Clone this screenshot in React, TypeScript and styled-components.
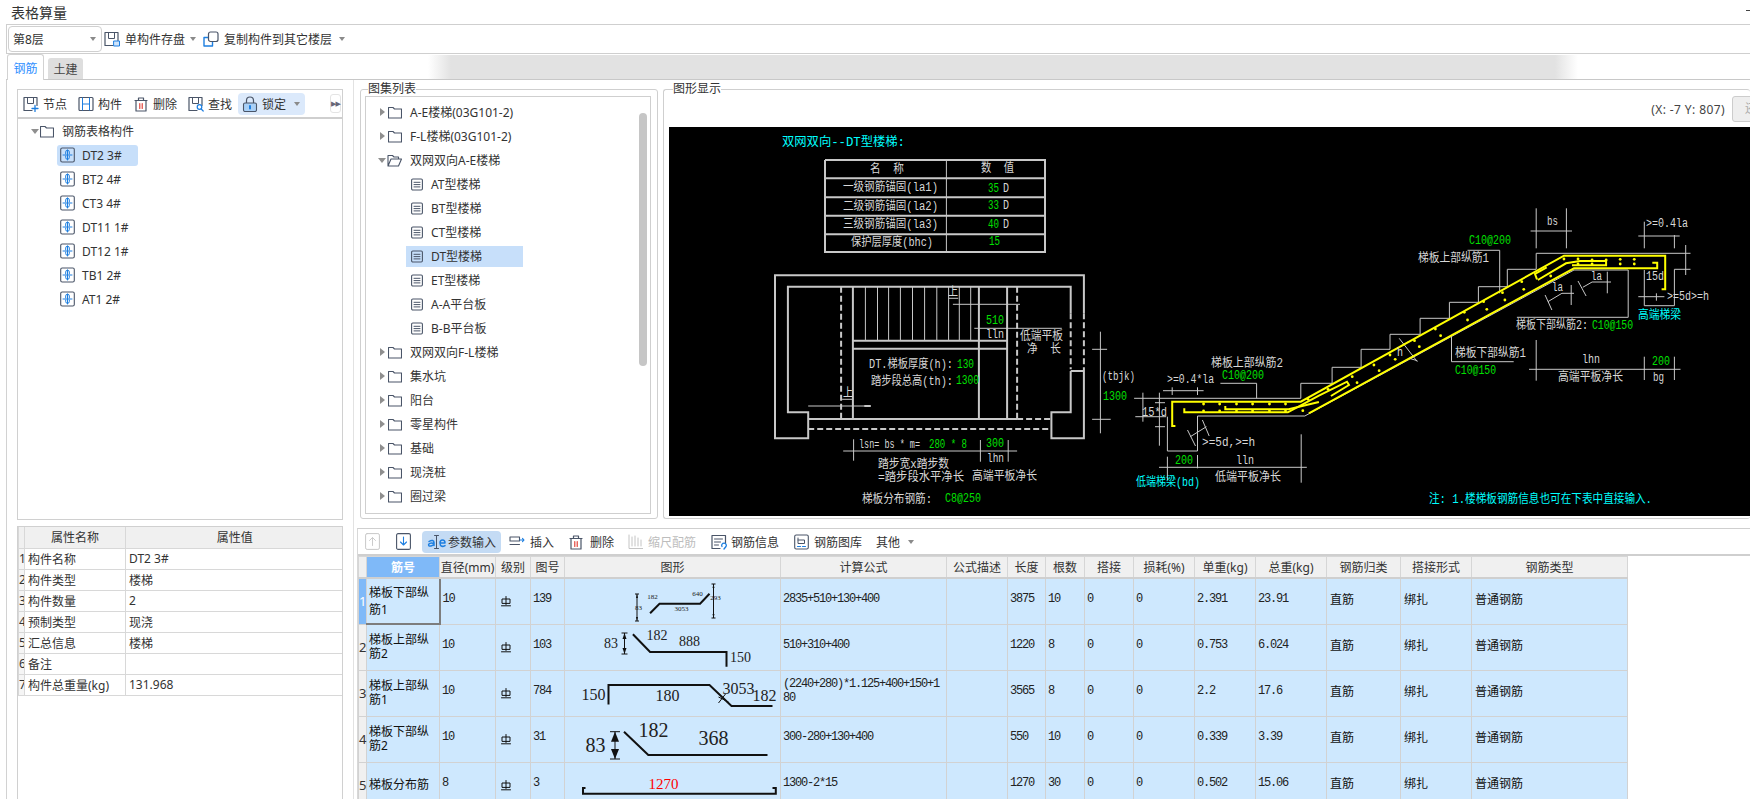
import React from 'react';
import styled, { createGlobalStyle } from 'styled-components';

const Global = createGlobalStyle`
  html, body { margin: 0; padding: 0; background: #fff; }
  body { font-family: "Noto Sans", "Noto Sans CJK SC", sans-serif; font-size: 12px; color: #333; }
  * { box-sizing: border-box; }
`;

const Page = styled.div`
  width: 1750px; height: 799px; overflow: hidden; display: flex; flex-direction: column; background: #fff;
`;
const TitleBar = styled.div`
  height: 24px; flex: none; display: flex; align-items: center; justify-content: space-between;
  padding-left: 11px; font-size: 14px; color: #333;
`;
const MinDash = styled.span`width: 4px; height: 1px; background: #444; margin-bottom: 3px;`;
const TopBar = styled.div`
  height: 30px; flex: none; margin-left: 6px; display: flex; align-items: center; padding-left: 1px;
  border: 1px solid #cfcfcf; border-right: 0;
`;
const Combo = styled.div`
  width: 94px; height: 26px; border: 1px solid #d0d0d0; border-radius: 4px; display: flex; align-items: center;
  justify-content: space-between; padding: 0 5px 0 4px; flex: none;
`;
const Caret = styled.i<{ $ml?: number }>`
  display: inline-block; width: 0; height: 0; flex: none; margin-left: ${p => p.$ml ?? 0}px;
  border-left: 3px solid transparent; border-right: 3px solid transparent; border-top: 4px solid #8a8a8a;
`;
const Tool = styled.div<{ $ml?: number; $on?: string; $off?: boolean; $gap?: number }>`
  display: inline-flex; align-items: center; flex: none; height: 22px; gap: ${p => p.$gap ?? 5}px;
  margin-left: ${p => p.$ml ?? 0}px; color: ${p => (p.$off ? '#bdbdbd' : '#333')};
  ${p => (p.$on ? `background:${p.$on}; border-radius:4px; padding:0 5px 0 4px;` : '')}
`;
const TabRow = styled.div`
  height: 26px; flex: none; margin-left: 6px; display: flex; align-items: flex-end; border-bottom: 1px solid #c8c8c8;
`;
const ActiveTab = styled.div`
  width: 37px; height: 26px; margin-bottom: -1px; margin-left: 1px; background: #fff; border: 1px solid #d2d2d2;
  border-bottom: 0; border-radius: 3px 3px 0 0; color: #2f8fff; display: flex; align-items: center; justify-content: center;
`;
const IdleTab = styled.div`
  width: 35px; height: 21px; margin-left: 4px; background: #dedede; border-radius: 3px 3px 0 0;
  color: #444; display: flex; align-items: center; justify-content: center;
`;
const TabFiller = styled.div`
  width: 1150px; height: 24px; margin-left: 345px;
  background: linear-gradient(to right, #fff, #e2e2e2 2%, #e2e2e2 98%, #fff);
`;
const Body = styled.div`flex: 1; min-height: 0; display: flex;`;
const LeftCol = styled.div`
  width: 348px; margin-left: 6px; flex: none; padding: 9px 10px 0 10px; display: flex; flex-direction: column; gap: 6px;
  border-left: 1px solid #d2d2d2; border-right: 1px solid #e2e2e2;
`;
const TreeBox = styled.div`height: 431px; flex: none; border: 1px solid #d0d0d0; overflow: hidden;`;
const LeftTools = styled.div`
  height: 29px; display: flex; align-items: center; padding: 0 1px 0 5px; border-bottom: 2px solid #cfcfcf;
`;
const Collapse = styled.div`
  margin-left: auto; width: 11px; height: 19px; border: 1px solid #e4e4e4; border-radius: 3px; color: #667;
  display: flex; align-items: center; justify-content: center; font-size: 7px; letter-spacing: -1px; font-family: "DejaVu Sans", sans-serif;
`;
const Row = styled.div<{ $pad: number }>`
  height: 24px; display: flex; align-items: center; padding-left: ${p => p.$pad}px; white-space: nowrap;
`;
const SelBox = styled.div<{ $w: number; $r?: number; $sel?: boolean; $inset?: number; $gap?: number }>`
  display: flex; align-items: center; height: 21px; width: ${p => p.$w}px; gap: ${p => p.$gap ?? 7}px; padding-left: ${p => p.$inset ?? 3}px;
  border-radius: ${p => p.$r ?? 0}px; background: ${p => (p.$sel ? '#c7dffa' : 'transparent')};
`;
const ArrowRight = styled.i`
  width: 0; height: 0; flex: none; border-top: 4px solid transparent; border-bottom: 4px solid transparent;
  border-left: 5px solid #8f8f8f; margin-left: 1px; margin-right: 3px;
`;
const ArrowDown = styled.i`
  width: 0; height: 0; flex: none; border-left: 4px solid transparent; border-right: 4px solid transparent;
  border-top: 5px solid #8f8f8f; margin-right: 1px;
`;
const FolderLabel = styled.span`margin-left: 8px;`;
const PropBox = styled.div`flex: 1; min-height: 0; border: 1px solid #d0d0d0; border-bottom: 0; overflow: hidden;`;
const PropTable = styled.table`
  border-collapse: collapse; table-layout: fixed; width: 325px; color: #333;
  th { height: 21px; background: #f0f0f0; font-weight: 400; border: 1px solid #d8d8d8; border-top: 0; padding: 0; }
  td { height: 21px; border: 1px solid #d8d8d8; padding: 0 0 0 3px; white-space: nowrap; overflow: hidden; }
  td:first-child { padding: 0; text-align: center; background: #f5f5f5; }
  td:last-child, th:last-child { border-right: 0; }
`;
const MainCol = styled.div`flex: 1; min-width: 0; display: flex; flex-direction: column; margin-left: 3px;`;
const UpperRow = styled.div`height: 439px; flex: none; display: flex; padding: 2px 0 0 3px; gap: 5px;`;
const Group = styled.fieldset<{ $w?: number }>`
  margin: 0; padding: 0 6px 4px 4px; min-width: 0; border: 1px solid #cfcfcf; border-radius: 3px; height: 437px;
  ${p => (p.$w ? `width:${p.$w}px; flex:none;` : 'flex:1; padding-right:0; border-right:0;')}
`;
const GroupTitle = styled.legend<{ $ml: number }>`
  margin-left: ${p => p.$ml}px; padding: 0; height: 14px; line-height: 14px; font-size: 12px; color: #333;
`;
const ListBox = styled.div`position: relative; height: 418px; border: 1px solid #cfcfcf; padding-top: 3px; overflow: hidden;`;
const ScrollThumb = styled.div`
  position: absolute; left: 273px; top: 16px; width: 8px; height: 253px; background: #c6c6c6; border-radius: 4px;
`;
const CoordRow = styled.div`
  height: 31px; display: flex; align-items: center; justify-content: flex-end; color: #444; margin-left: 1px;
  padding-bottom: 5px; letter-spacing: 0.4px;
`;
const GhostBtn = styled.div`
  flex: none; width: 40px; height: 26px; margin: 0 -22px 0 7px; background: #eee; border: 1px solid #ccc;
  border-radius: 3px; padding-left: 12px; line-height: 24px; color: #aaa; overflow: hidden; white-space: nowrap;
`;
const Canvas = styled.svg`display: block; width: 1081px; height: 389px; background: #000; margin-left: 1px;`;
const CadLine = styled.polyline<{ $k: string }>`
  fill: none;
  stroke: ${p => (p.$k === 'y' ? '#ffff00' : '#c8c8c8')};
  stroke-width: ${p => (p.$k === 'y' || p.$k === 't' || p.$k === 'd' ? 2 : 1)}px;
  stroke-dasharray: ${p => (p.$k === 'd' ? '6 3' : 'none')};
`;
const CadDot = styled.circle`fill: #ffff00;`;
const CadText = styled.text<{ $c: string }>`
  font-family: "Liberation Mono", "Noto Sans CJK SC", monospace; font-size: 12px;
  fill: ${p => (p.$c === 'g' ? '#00e000' : p.$c === 'c' ? '#00ffff' : '#d8d8d8')};
`;
const LowerPanel = styled.div`
  flex: 1; min-height: 0; margin-top: 9px; border-top: 1px solid #cfcfcf; border-left: 1px solid #d8d8d8; overflow: hidden;
`;
const LowerTools = styled.div`
  height: 27px; display: flex; align-items: center; padding-left: 7px; border-bottom: 2px solid #cfcfcf;
`;
const Grid = styled.table`
  border-collapse: collapse; table-layout: fixed; width: 1269px; color: #222;
  th { height: 21px; background: #f0f0f0; font-weight: 400; border: 1px solid #d6d6d6; border-bottom: 2px solid #cfcfcf; padding: 0; color: #333; white-space: nowrap; }
  td { height: 46px; background: #cee8fe; border: 1px solid #d2d2d2; padding: 0 0 4px 2px; vertical-align: middle; }
`;
const HeadActive = styled.th`&& { background: #7fb9f8; color: #fff; font-weight: 700; }`;
const NumCell = styled.td<{ $on?: boolean }>`
  && { padding: 0; text-align: center; background: ${p => (p.$on ? '#7fb9f8' : '#f0f0f0')}; color: ${p => (p.$on ? '#fff' : '#333')}; font-size: 13px; }
`;
const NameCell = styled.td<{ $on?: boolean }>`
  && {
    line-height: ${p => (p.$on ? 17 : 14.5)}px; padding: 0 0 0 2px; color: #111; word-break: break-all;
    ${p => (p.$on ? 'border: 2px solid #7d7d7d; border-top: 1px solid #7d7d7d; border-left: 1px solid #bbb;' : '')}
  }
`;
const Mono = styled.td`
  && { font-family: "Liberation Mono", "Noto Sans CJK SC", monospace; letter-spacing: -1.2px; word-break: break-all; line-break: anywhere; line-height: 14px; color: #222; padding-right: 3px; }
`;
const CjkCell = styled.td`&& { color: #111; padding-left: 3px; }`;
const GradeCell = styled.td`&& { padding: 0 0 0 5px; }`;
const ShapeCell = styled.td`&& { padding: 0; }`;
const Shape = styled.svg`display: block; width: 216px; height: 45px;`;
const ShapeLine = styled.polyline`fill: none; stroke: #111; stroke-width: 2px;`;
const ShapeThin = styled.polyline`fill: none; stroke: #111; stroke-width: 1px;`;
const ShapeHead = styled.polygon`fill: #111;`;
const ShapeText = styled.text<{ $s: number; $c?: string }>`
  font-family: "Liberation Serif", serif; font-size: ${p => p.$s}px; fill: ${p => p.$c ?? '#222'}; text-anchor: middle; dominant-baseline: central;
`;
const IconBox = styled.svg`display: block; flex: none; fill: none; stroke-linecap: round; stroke-linejoin: round;`;

const D = '#4a5568';
const B = '#1e7fe0';
const Ico = ({ w = 16, h = 16, children }: { w?: number; h?: number; children: React.ReactNode }) => (
  <IconBox width={w} height={h} viewBox={`0 0 ${w} ${h}`}>{children}</IconBox>
);
const SquareH = ({ bar = true }: { bar?: boolean }) => (
  <>
    <path d="M1 1.5h13v8M9 14.5H1v-13" stroke={D} strokeWidth="1.2" />
    {bar && <path d="M4.5 2v5.5h6V2" stroke={D} strokeWidth="1" />}
  </>
);
const SaveIcon = () => <Ico><SquareH /><rect x="10" y="10" width="5.5" height="5" fill="#cfe4fb" stroke={B} /></Ico>;
const CopyIcon = () => (
  <Ico>
    <path d="M1 6.5h4M1 6.5v8.5h8.5v-4" stroke={B} strokeWidth="1.4" />
    <rect x="5.5" y="1" width="9.5" height="9.5" rx="2" stroke={D} strokeWidth="1.2" />
  </Ico>
);
const NodeIcon = () => <Ico><SquareH /><path d="M12 9.5v6M9 12.5h6" stroke={B} strokeWidth="1.3" /></Ico>;
const PartIcon = () => (
  <Ico><rect x="1" y="1.5" width="14" height="13" rx="1" stroke={D} strokeWidth="1.2" /><path d="M4.5 2v12M11.5 2v12M4.5 8h7" stroke={B} strokeWidth="1" /></Ico>
);
const TrashIcon = () => (
  <Ico>
    <path d="M3 4.5v10.5h10V4.5zM2 4.5h12M5.5 4.5V2h5v2.5" stroke={D} strokeWidth="1.2" />
    <path d="M6.8 7.5v5M9.2 7.5v5" stroke="#e0352b" strokeWidth="1.1" />
  </Ico>
);
const FindIcon = () => (
  <Ico><SquareH /><circle cx="11.5" cy="11" r="2.3" stroke={B} strokeWidth="1.2" /><path d="M13.2 13l2 2" stroke={B} strokeWidth="1.2" /></Ico>
);
const LockIcon = () => (
  <Ico>
    <path d="M4.5 7V4.5a3.5 3.5 0 017 0V7" stroke={D} strokeWidth="1.2" />
    <rect x="1.5" y="7" width="13" height="8.5" rx="1.5" fill="#a9d0f7" stroke={D} strokeWidth="1.1" />
    <path d="M8 10v2.5" stroke={B} strokeWidth="2" />
  </Ico>
);
const Folder = () => <Ico w={14} h={13}><path d="M.5 3V1.5h4.5l1.5 1.5h7v9H.5z" stroke={D} strokeWidth="1.1" /></Ico>;
const FolderOpen = () => (
  <Ico w={15} h={13}><path d="M1 12V1.5h4.5L7 3h4.5v2M1 12l3-7h10.5l-3 7z" stroke={D} strokeWidth="1.1" /></Ico>
);
const DocIcon = () => (
  <Ico w={12} h={13}>
    <rect x=".6" y="1" width="10.8" height="11" rx="1.2" stroke={D} strokeWidth="1.1" />
    <path d="M3 4.3h6M3 6.6h6M3 8.9h6" stroke={D} strokeWidth="1" />
  </Ico>
);
const ItemIcon = () => (
  <Ico w={15} h={16}>
    <rect x=".7" y="1" width="13.6" height="14" rx="1.5" stroke={D} strokeWidth="1.1" />
    <path d="M7.5 3v10M3 8h9M5.7 7V5a1.8 1.8 0 013.6 0v2M5.7 9v1.5a1.8 1.8 0 003.6 0V9" stroke={B} strokeWidth="1" />
  </Ico>
);
const UpIcon = ({ off }: { off?: boolean }) => {
  const c = off ? '#c8c8c8' : D;
  return (
    <Ico w={15} h={17}>
      <rect x=".6" y=".6" width="13.8" height="15.8" rx="1.5" stroke={c} strokeWidth="1" />
      <path d="M7.5 12.5v-8M4.5 7.5l3-3 3 3" stroke={off ? '#ccc' : B} strokeWidth="1" />
    </Ico>
  );
};
const DownIcon = () => (
  <Ico w={15} h={17}>
    <rect x=".6" y=".6" width="13.8" height="15.8" rx="1.5" stroke={D} strokeWidth="1.1" />
    <path d="M7.5 4v8M4.5 9l3 3 3-3" stroke={B} strokeWidth="1.1" />
  </Ico>
);
const ParamIcon = () => (
  <Ico w={20} h={16}>
    <path d="M3 7.5c3-2 5-1 5 1v3M8 9.5c-3-1-6 0-5.3 1.8.7 1.4 3.6.7 5.3-1" stroke={B} strokeWidth="1.5" />
    <path d="M8.5 1.5h4M8.5 14.5h4M10.5 1.5v13" stroke={D} strokeWidth="1" />
    <path d="M14 9h5M19 9c0-4-5-4-5 0s3 3.8 5 2.6" stroke={B} strokeWidth="1.5" />
  </Ico>
);
const InsertIcon = () => (
  <Ico w={16} h={14}>
    <path d="M1 2h9.5v4M1 2v4h9.5M1 9.5h9.5" stroke={D} strokeWidth="1.1" />
    <path d="M11 5h4M13.5 3.3L15 5l-1.5 1.7" stroke={B} strokeWidth="1.1" />
  </Ico>
);
const ScaleIcon = () => (
  <Ico w={15} h={16}>
    <path d="M1 1v13.5h14M4 3v9M7 2v10M10 4v8M13 6v6" stroke="#c4c4c4" strokeWidth="1" />
  </Ico>
);
const InfoIcon = () => (
  <Ico>
    <path d="M9 14.5H1v-13h13.5v8" stroke={D} strokeWidth="1.2" />
    <path d="M3.5 5h8M3.5 8h6M3.5 11h4" stroke={D} strokeWidth="1" />
    <path d="M11 12.5a2.3 2.3 0 114 0l-2 2.5" stroke={B} strokeWidth="1.3" />
  </Ico>
);
const LibIcon = () => (
  <Ico w={15} h={16}>
    <rect x=".7" y="1" width="13.6" height="14" rx="1.5" stroke={D} strokeWidth="1.1" />
    <path d="M4 4v5.5h6.5V6H4" stroke={D} strokeWidth="1" />
    <path d="M3.5 12.5h3M8.5 12.5h3" stroke={B} strokeWidth="1.2" />
  </Ico>
);
const GradeMark = () => (
  <IconBox width="10" height="11" viewBox="0 0 10 11">
    <path d="M1 7V3h8v4zM5 .5V8.5M.5 9.8h9" stroke="#111" strokeWidth="1" />
  </IconBox>
);

type CadL = [string, number[]];
const mapL = (a: number[]) => a.map((v, i) => (i % 2 ? (80 + v / 3).toFixed(1) : (660 + v / 2.8).toFixed(1))).join(' ');
const mapR = (a: number[]) => a.map((v, i) => (i % 2 ? (80 + v / 3).toFixed(1) : (1120 + v / 2.489).toFixed(1))).join(' ');

const leftLines: CadL[] = [
  ['t', [462, 240, 1078, 240, 1078, 516, 462, 516, 462, 240]],
  ['t', [462, 295, 1078, 295]], ['t', [462, 352, 1078, 352]], ['t', [462, 407, 1078, 407]], ['t', [462, 463, 1078, 463]],
  ['n', [802, 240, 802, 516]],
  ['t', [1150, 700, 1150, 620, 358, 620, 358, 997, 415, 997, 415, 1075, 322, 1075, 322, 586, 1187, 586, 1187, 700]],
  ['d', [1150, 700, 1150, 868]], ['d', [1187, 700, 1187, 870]],
  ['t', [1150, 873, 1187, 873]],
  ['t', [1150, 873, 1150, 997, 1096, 997, 1096, 1075, 1187, 1075, 1187, 870]],
  ['t', [415, 1017, 1000, 1017]], ['d', [1000, 1017, 1096, 1017]], ['d', [415, 1047, 1096, 1047]],
  ['t', [540, 620, 540, 1017]], ['t', [893, 620, 893, 1017]], ['t', [972, 620, 972, 1017]],
  ['d', [507, 620, 507, 1017]], ['d', [1000, 620, 1000, 1017]],
  ['t', [540, 782, 972, 782]], ['t', [540, 806, 972, 806]],
  ...[575, 609, 640, 673, 707, 741, 775, 808, 838, 870].map((x): CadL => ['n', [x, 620, x, 782]]),
  ['n', [808, 655, 835, 655]], ['n', [820, 673, 1008, 673]], ['n', [880, 745, 1125, 745]],
  ['n', [510, 958, 540, 958]], ['n', [415, 978, 590, 978]], ['t', [572, 978, 590, 978]],
  ['n', [1233, 755, 1233, 1060]], ['n', [1210, 808, 1252, 808]], ['n', [1210, 1018, 1262, 1018]],
  ['n', [513, 1113, 1000, 1113]], ['n', [542, 1078, 542, 1142]], ['n', [897, 1080, 897, 1145]], ['n', [975, 1080, 975, 1145]],
];
const rightLines: CadL[] = [
  ['n', [35, 955, 450, 955, 450, 910, 528, 910, 528, 862, 600, 862, 600, 808, 672, 808, 672, 763, 747, 763, 747, 715, 820, 715, 820, 667, 892, 667, 892, 620, 964, 620, 964, 568, 1036, 568, 1036, 520, 1420, 520]],
  ['n', [118, 1010, 118, 1113, 193, 1113, 193, 1008, 460, 1008, 1130, 570, 1265, 570]],
  ['n', [1305, 570, 1305, 677, 1380, 677, 1380, 568, 1420, 568]],
  ['n', [865, 511, 945, 511, 945, 640]], ['n', [988, 712, 1265, 712, 1265, 570]],
  ['n', [825, 765, 825, 845, 980, 845]],
  ['n', [1036, 385, 1036, 505]], ['n', [1111, 385, 1111, 505]], ['n', [1022, 453, 1125, 453]],
  ['n', [1290, 468, 1393, 468]], ['n', [1305, 425, 1305, 505]], ['n', [1380, 465, 1380, 505]],
  ['n', [1408, 495, 1408, 585]], ['n', [1290, 650, 1355, 650]], ['n', [1335, 640, 1335, 662]],
  ['n', [1018, 868, 1395, 868]], ['n', [1036, 780, 1036, 902]], ['n', [1305, 830, 1305, 900]], ['n', [1380, 830, 1380, 900]],
  ['n', [250, 910, 340, 910, 340, 955]], ['n', [107, 932, 208, 932]], ['n', [130, 922, 130, 945]], ['n', [193, 922, 193, 945]],
  ['n', [57, 938, 57, 1025]], ['n', [98, 938, 98, 1097]], ['n', [38, 1010, 115, 1010]], ['n', [87, 968, 112, 968]], ['n', [87, 1040, 112, 1040]],
  ['n', [97, 1162, 465, 1162]], ['n', [118, 1130, 118, 1200]], ['n', [193, 1125, 193, 1165]], ['n', [451, 1063, 451, 1208]],
  ['n', [168, 1050, 188, 1098]], ['n', [205, 1020, 222, 1068]], ['n', [175, 1070, 215, 1040]],
  ['n', [1058, 645, 1075, 690]], ['n', [1065, 665, 1100, 640, 1130, 640]], ['n', [1123, 615, 1123, 675]],
  ['n', [1140, 603, 1160, 648]], ['n', [1152, 622, 1175, 606, 1222, 606]], ['n', [1213, 575, 1213, 640]],
  ['n', [695, 775, 740, 845]], ['n', [720, 835, 740, 842]], ['n', [697, 800, 718, 785]],
  ['y', [138, 1038, 130, 1038, 130, 965, 450, 965, 1105, 527, 1357, 527, 1357, 628, 1348, 628]],
  ['y', [160, 985, 160, 997, 418, 997, 495, 947, 565, 905, 570, 915, 525, 948]],
  ['y', [262, 978, 262, 988, 420, 988, 495, 966]],
  ['y', [470, 1000, 1130, 565, 1337, 565, 1337, 548, 1325, 548]],
  ['y', [1038, 598, 1033, 582, 1062, 562]],
  ['y', [1040, 600, 1110, 550, 1145, 543, 1210, 543, 1210, 556, 1125, 556]],
];
const dots: number[][] = [
  [208, 972], [248, 972], [290, 972], [330, 972], [372, 972], [412, 972], [208, 993], [248, 993], [290, 993], [330, 993], [372, 993], [412, 993],
  [468, 958], [518, 928], [578, 890], [632, 855], [672, 825], [733, 782], [785, 747], [857, 697], [905, 665], [952, 638], [1000, 605],
  [455, 992], [590, 908], [645, 872], [685, 838], [745, 800], [798, 767], [865, 720], [913, 688], [958, 660], [1005, 628], [1072, 588],
  [1105, 537], [1140, 537], [1175, 540], [1210, 540], [1245, 538], [1280, 538], [1140, 552], [1175, 552], [1245, 552], [1280, 552],
];
type CadT = [number, number, number, string, string];
const cadTexts: CadT[] = [
  [782, 143, 123, '双网双向--DT型楼梯:', 'c'],
  [870, 170, 34, '名  称', 'w'], [981, 169, 33, '数  值', 'w'],
  [843, 188, 95, '一级钢筋锚固(la1)', 'w'], [843, 207, 95, '二级钢筋锚固(la2)', 'w'], [843, 225, 95, '三级钢筋锚固(la3)', 'w'],
  [851, 243, 82, '保护层厚度(bhc)', 'w'],
  [988, 189, 11, '35', 'g'], [1003, 189, 6, 'D', 'w'], [988, 206, 11, '33', 'g'], [1003, 206, 6, 'D', 'w'],
  [988, 225, 11, '40', 'g'], [1003, 225, 6, 'D', 'w'], [989, 242, 11, '15', 'g'],
  [948, 293, 10, '上', 'w'], [986, 321, 18, '510', 'g'], [986, 335, 18, 'lln', 'w'],
  [1020, 337, 43, '低端平板', 'w'], [1027, 350, 34, '净  长', 'w'],
  [869, 365, 84, 'DT.梯板厚度(h):', 'w'], [957, 365, 17, '130', 'g'],
  [871, 382, 82, '踏步段总高(th):', 'w'], [956, 381, 23, '1300', 'g'],
  [843, 394, 10, '上', 'w'],
  [1102, 377, 33, '(tbjk)', 'w'], [1103, 397, 24, '1300', 'g'],
  [859, 445, 61, 'lsn= bs * m=', 'w'], [929, 445, 38, '280 * 8', 'g'], [986, 444, 18, '300', 'g'], [987, 459, 17, 'lhn', 'w'],
  [878, 465, 71, '踏步宽x踏步数', 'w'], [878, 478, 86, '=踏步段水平净长', 'w'], [972, 477, 65, '高端平板净长', 'w'],
  [862, 500, 70, '梯板分布钢筋:', 'w'], [945, 499, 36, 'C8@250', 'g'],
  [1418, 259, 71, '梯板上部纵筋1', 'w'], [1469, 241, 42, 'C10@200', 'g'], [1547, 222, 11, 'bs', 'w'],
  [1646, 224, 42, '>=0.4la', 'w'], [1646, 277, 18, '15d', 'w'], [1667, 297, 42, '>=5d>=h', 'w'], [1638, 316, 43, '高端梯梁', 'c'],
  [1591, 277, 11, 'la', 'w'], [1552, 288, 11, 'la', 'w'],
  [1516, 326, 72, '梯板下部纵筋2:', 'w'], [1592, 326, 41, 'C10@150', 'g'],
  [1455, 354, 71, '梯板下部纵筋1', 'w'], [1455, 371, 41, 'C10@150', 'g'],
  [1582, 360, 18, 'lhn', 'w'], [1652, 362, 18, '200', 'g'], [1558, 378, 65, '高端平板净长', 'w'], [1653, 378, 11, 'bg', 'w'],
  [1211, 364, 72, '梯板上部纵筋2', 'w'], [1222, 376, 42, 'C10@200', 'g'], [1167, 380, 47, '>=0.4*la', 'w'],
  [1142, 413, 25, '15*d', 'w'], [1202, 443, 53, '>=5d,>=h', 'w'], [1175, 461, 18, '200', 'g'], [1236, 461, 18, 'lln', 'w'],
  [1136, 483, 64, '低端梯梁(bd)', 'c'], [1215, 478, 66, '低端平板净长', 'w'], [1397, 353, 6, 'h', 'w'],
  [1429, 500, 223, '注: 1.楼梯板钢筋信息也可在下表中直接输入.', 'c'],
];

const CadDrawing = () => (
  <Canvas viewBox="669 127 1081 389">
    {leftLines.map(([k, a], i) => <CadLine key={`l${i}`} $k={k} points={mapL(a)} />)}
    {rightLines.map(([k, a], i) => <CadLine key={`r${i}`} $k={k} points={mapR(a)} />)}
    {dots.map(([x, y], i) => <CadDot key={i} cx={1120 + x / 2.489} cy={80 + y / 3} r={1.4} />)}
    {cadTexts.map(([x, y, w, t, c], i) => (
      <CadText key={i} $c={c} x={x} y={y} dominantBaseline="central" textLength={w} lengthAdjust="spacingAndGlyphs" xmlSpace="preserve">{t}</CadText>
    ))}
  </Canvas>
);

const Arrow = ({ x, y1, y2, s = 3 }: { x: number; y1: number; y2: number; s?: number }) => (
  <>
    <ShapeThin points={`${x},${y1} ${x},${y2}`} />
    <ShapeThin points={`${x - s},${y1} ${x + s},${y1}`} />
    <ShapeThin points={`${x - s},${y2} ${x + s},${y2}`} />
    <ShapeHead points={`${x},${y1} ${x - s + 1},${y1 + s * 2} ${x + s - 1},${y1 + s * 2}`} />
    <ShapeHead points={`${x},${y2} ${x - s + 1},${y2 - s * 2} ${x + s - 1},${y2 - s * 2}`} />
  </>
);
const vb = (top: number) => `563.5 ${top} 216 45`;
const shapes: React.ReactNode[] = [
  <Shape viewBox={vb(578)} key="1">
    <ShapeLine points="648.6,612.3 658,602.7 698.6,602.7 708,592.7" />
    <Arrow x={635.5} y1={593} y2={620} s={2} /><Arrow x={712} y1={583} y2={617} s={2} />
    <ShapeText $s={7} x={651} y={596}>182</ShapeText><ShapeText $s={7} x={696} y={593}>640</ShapeText>
    <ShapeText $s={7} x={680} y={608}>3053</ShapeText><ShapeText $s={7} x={637} y={606.5}>83</ShapeText><ShapeText $s={7} x={714} y={597}>293</ShapeText>
  </Shape>,
  <Shape viewBox={vb(624)} key="2">
    <ShapeLine points="631.4,633.3 648.6,651 725,651 725,665.7" />
    <Arrow x={623} y1={632} y2={653} s={3} />
    <ShapeText $s={14} x={609.5} y={642}>83</ShapeText><ShapeText $s={14} x={655.5} y={634}>182</ShapeText>
    <ShapeText $s={14} x={688} y={640}>888</ShapeText><ShapeText $s={14} x={739} y={656}>150</ShapeText>
  </Shape>,
  <Shape viewBox={vb(670)} key="3">
    <ShapeLine points="607,703.5 607,684 708,684 730,705 771,705" />
    <ShapeThin points="717,696 727,701" /><ShapeThin points="717,702 724,693" />
    <ShapeText $s={16} x={592} y={693}>150</ShapeText><ShapeText $s={16} x={666} y={694}>180</ShapeText>
    <ShapeText $s={16} x={737} y={687}>3053</ShapeText><ShapeText $s={16} x={763} y={694}>182</ShapeText>
  </Shape>,
  <Shape viewBox={vb(716)} key="4">
    <ShapeLine points="622.5,730.7 646.8,754 766,754" />
    <Arrow x={613.5} y1={730.7} y2={758} s={5} />
    <ShapeText $s={20} x={594} y={744}>83</ShapeText><ShapeText $s={20} x={652} y={729}>182</ShapeText><ShapeText $s={20} x={712} y={737}>368</ShapeText>
  </Shape>,
  <Shape viewBox={vb(762)} key="5">
    <ShapeLine points="584,787 581.5,787 581.5,792.7 774.3,792.7 774.3,787 771,787" />
    <ShapeText $s={15} $c="#f00" x={662} y={782.5}>1270</ShapeText>
  </Shape>,
];

const rebarRows = [
  { n: '梯板下部纵筋1', d: '10', t: '139', f: '2835+510+130+400', l: '3875', c: '10', u: '2.391', s: '23.91' },
  { n: '梯板上部纵筋2', d: '10', t: '103', f: '510+310+400', l: '1220', c: '8', u: '0.753', s: '6.024' },
  { n: '梯板上部纵筋1', d: '10', t: '784', f: '(2240+280)*1.125+400+150+180', l: '3565', c: '8', u: '2.2', s: '17.6' },
  { n: '梯板下部纵筋2', d: '10', t: '31', f: '300-280+130+400', l: '550', c: '10', u: '0.339', s: '3.39' },
  { n: '梯板分布筋', d: '8', t: '3', f: '1300-2*15', l: '1270', c: '30', u: '0.502', s: '15.06' },
];
const widths = [8, 73, 56, 35, 34, 216, 166, 61, 38, 39, 49, 61, 61, 71, 74, 71, 156];
const heads = ['直径(mm)', '级别', '图号', '图形', '计算公式', '公式描述', '长度', '根数', '搭接', '损耗(%)', '单重(kg)', '总重(kg)', '钢筋归类', '搭接形式', '钢筋类型'];
const props: [string, string][] = [
  ['构件名称', 'DT2 3#'], ['构件类型', '楼梯'], ['构件数量', '2'], ['预制类型', '现浇'], ['汇总信息', '楼梯'], ['备注', ''], ['构件总重量(kg)', '131.968'],
];
const parts = ['DT2 3#', 'BT2 4#', 'CT3 4#', 'DT11 1#', 'DT12 1#', 'TB1 2#', 'AT1 2#'];
const closedA = ['A-E楼梯(03G101-2)', 'F-L楼梯(03G101-2)'];
const docs = ['AT型楼梯', 'BT型楼梯', 'CT型楼梯', 'DT型楼梯', 'ET型楼梯', 'A-A平台板', 'B-B平台板'];
const closedB = ['双网双向F-L楼梯', '集水坑', '阳台', '零星构件', '基础', '现浇桩', '圈过梁', ''];

const ClosedFolder = ({ name }: { name: string }) => (
  <Row $pad={13}><ArrowRight /><Folder /><FolderLabel>{name}</FolderLabel></Row>
);

export default function App() {
  return (
    <Page>
      <Global />
      <TitleBar>表格算量<MinDash /></TitleBar>
      <TopBar>
        <Combo>第8层<Caret /></Combo>
        <Tool $ml={2}><SaveIcon />单构件存盘<Caret /></Tool>
        <Tool $ml={7}><CopyIcon />复制构件到其它楼层<Caret $ml={2} /></Tool>
      </TopBar>
      <TabRow>
        <ActiveTab>钢筋</ActiveTab>
        <IdleTab>土建</IdleTab>
        <TabFiller />
      </TabRow>
      <Body>
        <LeftCol>
          <TreeBox>
            <LeftTools>
              <Tool $gap={4}><NodeIcon />节点</Tool>
              <Tool $ml={11} $gap={4}><PartIcon />构件</Tool>
              <Tool $ml={11} $gap={4}><TrashIcon />删除</Tool>
              <Tool $ml={11} $gap={4}><FindIcon />查找</Tool>
              <Tool $ml={6} $gap={4} $on="#dbe9fb"><LockIcon />锁定<Caret $ml={4} /></Tool>
              <Collapse>▶▶</Collapse>
            </LeftTools>
            <Row $pad={13}><ArrowDown /><Folder /><FolderLabel>钢筋表格构件</FolderLabel></Row>
            {parts.map((p, i) => (
              <Row $pad={39} key={p}><SelBox $w={81} $r={3} $sel={i === 0}><ItemIcon />{p}</SelBox></Row>
            ))}
          </TreeBox>
          <PropBox>
            <PropTable>
              <colgroup><col width="6" /><col width="101" /><col width="218" /></colgroup>
              <thead><tr><th /><th>属性名称</th><th>属性值</th></tr></thead>
              <tbody>
                {props.map(([k, v], i) => (
                  <tr key={k}><td>{i + 1}</td><td>{k}</td><td>{v}</td></tr>
                ))}
              </tbody>
            </PropTable>
          </PropBox>
        </LeftCol>
        <MainCol>
          <UpperRow>
            <Group $w={298}>
              <GroupTitle $ml={3}>图集列表</GroupTitle>
              <ListBox>
                <ScrollThumb />
                {closedA.map(n => <ClosedFolder name={n} key={n} />)}
                <Row $pad={12}><ArrowDown /><FolderOpen /><FolderLabel>双网双向A-E楼梯</FolderLabel></Row>
                {docs.map(d => (
                  <Row $pad={40} key={d}><SelBox $w={117} $inset={5} $gap={8} $sel={d === 'DT型楼梯'}><DocIcon />{d}</SelBox></Row>
                ))}
                {closedB.map(n => <ClosedFolder name={n} key={n || 'peek'} />)}
              </ListBox>
            </Group>
            <Group>
              <GroupTitle $ml={5}>图形显示</GroupTitle>
              <CoordRow>(X: -7 Y: 807)<GhostBtn>还原</GhostBtn></CoordRow>
              <CadDrawing />
            </Group>
          </UpperRow>
          <LowerPanel>
            <LowerTools>
              <UpIcon off />
              <Tool $ml={16}><DownIcon /></Tool>
              <Tool $ml={11} $on="#c4dbf4" $gap={2}><ParamIcon />参数输入</Tool>
              <Tool $ml={8}><InsertIcon />插入</Tool>
              <Tool $ml={14} $gap={6}><TrashIcon />删除</Tool>
              <Tool $ml={14} $off><ScaleIcon />缩尺配筋</Tool>
              <Tool $ml={15} $gap={4}><InfoIcon />钢筋信息</Tool>
              <Tool $ml={15}><LibIcon />钢筋图库</Tool>
              <Tool $ml={14}>其他<Caret $ml={3} /></Tool>
            </LowerTools>
            <Grid>
              <colgroup>{widths.map((w, i) => <col width={w} key={i} />)}</colgroup>
              <thead>
                <tr>
                  <th />
                  <HeadActive>筋号</HeadActive>
                  {heads.map(h => <th key={h}>{h}</th>)}
                </tr>
              </thead>
              <tbody>
                {rebarRows.map((r, i) => (
                  <tr key={r.n}>
                    <NumCell $on={i === 0}>{i + 1}</NumCell>
                    <NameCell $on={i === 0}>{r.n}</NameCell>
                    <Mono>{r.d}</Mono>
                    <GradeCell><GradeMark /></GradeCell>
                    <Mono>{r.t}</Mono>
                    <ShapeCell>{shapes[i]}</ShapeCell>
                    <Mono>{r.f}</Mono>
                    <td />
                    <Mono>{r.l}</Mono>
                    <Mono>{r.c}</Mono>
                    <Mono>0</Mono>
                    <Mono>0</Mono>
                    <Mono>{r.u}</Mono>
                    <Mono>{r.s}</Mono>
                    <CjkCell>直筋</CjkCell>
                    <CjkCell>绑扎</CjkCell>
                    <CjkCell>普通钢筋</CjkCell>
                  </tr>
                ))}
              </tbody>
            </Grid>
          </LowerPanel>
        </MainCol>
      </Body>
    </Page>
  );
}
